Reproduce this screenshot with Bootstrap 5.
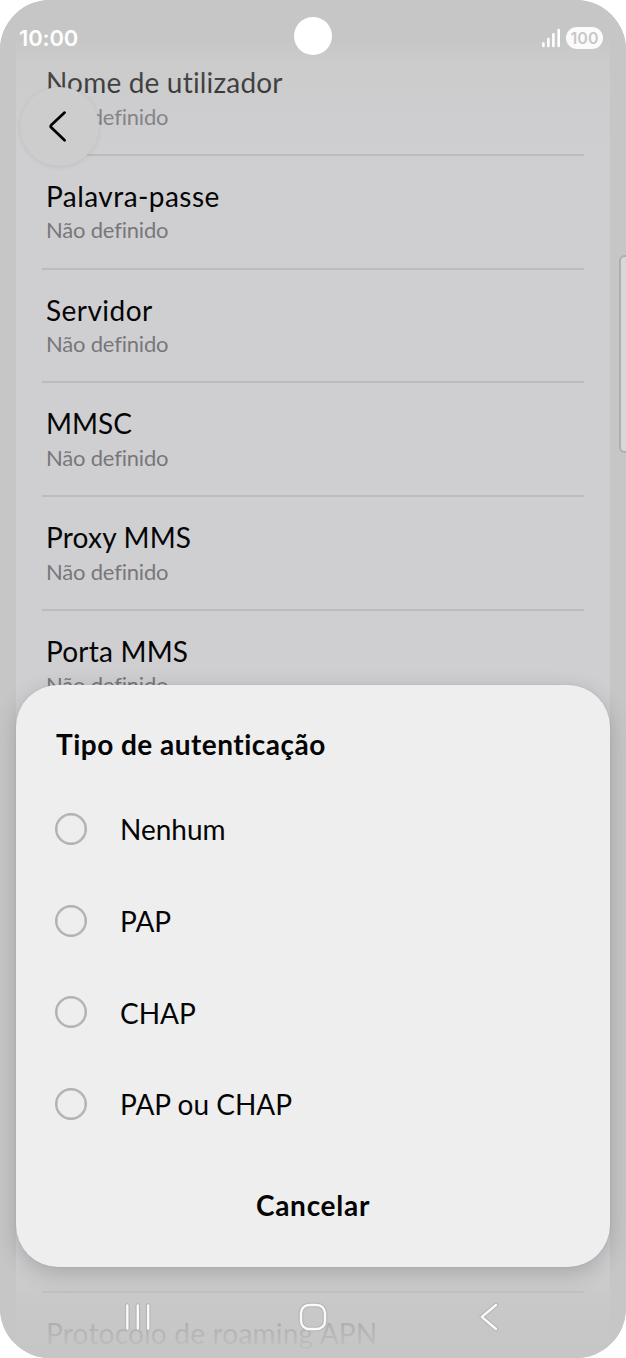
<!DOCTYPE html>
<html lang="pt">
<head>
<meta charset="utf-8">
<meta name="viewport" content="width=device-width, initial-scale=1">
<title>Tipo de autenticação</title>
<link href="https://cdn.jsdelivr.net/npm/bootstrap@5.3.0/dist/css/bootstrap.min.css" rel="stylesheet">
<style>
body{background:#fff;font-family:Lato,"Noto Sans",sans-serif;color:#050506;font-variant-ligatures:none}
.phone{width:626px;height:1358px;border-radius:50px;background:#c6c6c6}
.settings{width:594px;margin:42px 16px 0;padding:0 26px;background:#cfcfd1;height:1316px}
.setting{height:113.75px;border-bottom:2px solid #bcbcbe;padding:21px 4px 0}
.setting-name{font-size:28px;line-height:38px}
.setting-value{font-size:22px;line-height:30px;color:#77777a;letter-spacing:-.2px;padding-top:.5px}
.unseen{height:568.5px;border-bottom:2px solid #b9b9bb}
.sp-1{letter-spacing:.18px}
.sp-2{letter-spacing:.2px}
.sp-3{letter-spacing:.45px}
.fade-top{height:155px;background:linear-gradient(#c6c6c6 0,#c6c6c6 24%,rgba(198,198,198,.4) 40%,rgba(198,198,198,0))}
.fade-bottom{height:100px;background:linear-gradient(rgba(198,198,198,0),rgba(198,198,198,.65) 38%,rgba(198,198,198,.88) 65%,rgba(198,198,198,.96) 88%,#c6c6c6)}
.status{height:76px;padding:0 23px 0 19px}
.clock{font:600 22px/30px Inter,sans-serif;letter-spacing:-.15px;color:#fff}
.camera{width:38px;height:38px;background:#fff;left:294px;top:17px}
.battery{width:37px;height:22px;border-radius:11px;background:#fbfbfb;color:#c8c8c8;font:600 16px/22px Inter,sans-serif}
.back{width:79px;height:79px;left:20px;top:87px;background:#cdcdcd;box-shadow:0 1px 5px rgba(0,0,0,.08)}
.edge-handle{width:12px;height:198px;left:619px;top:255px;border:2px solid #afafaf;border-radius:9px;background:#d8d8d9}
.sheet{left:16px;top:685px;width:594px;height:582px;border-radius:42px;background:#eee;box-shadow:0 6px 22px rgba(0,0,0,.19),0 0 2px rgba(0,0,0,.1);padding:40px 40px 0 39px}
.sheet-title{font-size:28px;line-height:38px;font-weight:700;margin:0 0 20px 1px;letter-spacing:.48px}
.choice{height:91.7px;gap:33px}
.choice .form-check-input{width:32px;height:32px;border:2px solid #b1b1b4;box-shadow:inset 0 0 0 .5px #b1b1b4;background:transparent;margin:0}
.choice label{font-size:28px;line-height:38px;padding-top:1px}
.cancel{font-size:28px;line-height:38px;font-weight:700;color:#050506;padding:0 0 0 1px;border:0;margin-top:36px;letter-spacing:.72px}
.navkeys{height:82px}
</style>
</head>
<body>
<main class="phone position-relative overflow-hidden">
  <div class="overflow-hidden h-100">
  <section class="settings">
    <div class="setting"><div class="setting-name sp-1">Nome de utilizador</div><div class="setting-value">Não definido</div></div>
    <div class="setting"><div class="setting-name sp-3">Palavra-passe</div><div class="setting-value">Não definido</div></div>
    <div class="setting"><div class="setting-name sp-3">Servidor</div><div class="setting-value">Não definido</div></div>
    <div class="setting"><div class="setting-name">MMSC</div><div class="setting-value">Não definido</div></div>
    <div class="setting"><div class="setting-name sp-2">Proxy MMS</div><div class="setting-value">Não definido</div></div>
    <div class="setting"><div class="setting-name sp-2">Porta MMS</div><div class="setting-value">Não definido</div></div>
    <div class="unseen"></div>
    <div class="setting border-0"><div class="setting-name sp-2">Protocolo de roaming APN</div></div>
  </section>
  </div>
  <div class="fade-top position-absolute top-0 start-0 w-100"></div>
  <div class="fade-bottom position-absolute bottom-0 start-0 w-100"></div>
  <header class="status position-absolute top-0 start-0 w-100 d-flex align-items-center justify-content-between">
    <span class="clock">10:00</span>
    <span class="d-flex align-items-center gap-1">
      <svg width="20" height="20" viewBox="0 0 20 20" stroke="#fff" stroke-width="2.6" stroke-linecap="round"><path d="M1.4 15.6V18M6.4 11V18M11.4 6.3V18M16.7 2V18"/></svg>
      <span class="battery text-center">100</span>
    </span>
  </header>
  <div class="camera position-absolute rounded-circle"></div>
  <div class="back position-absolute rounded-circle">
    <svg width="79" height="79" viewBox="0 0 79 79" fill="none" stroke="#000" stroke-width="2.7" stroke-linecap="round" stroke-linejoin="round"><path d="M44.6 25.6L31.3 38.1Q30.1 39.3 31.3 40.5L44.6 53.2"/></svg>
  </div>
  <div class="edge-handle position-absolute"></div>
  <section class="sheet position-absolute">
    <h1 class="sheet-title">Tipo de autenticação</h1>
    <div class="choice d-flex align-items-center"><input class="form-check-input" type="radio" name="auth" id="a1"><label for="a1">Nenhum</label></div>
    <div class="choice d-flex align-items-center"><input class="form-check-input" type="radio" name="auth" id="a2"><label for="a2">PAP</label></div>
    <div class="choice d-flex align-items-center"><input class="form-check-input" type="radio" name="auth" id="a3"><label for="a3">CHAP</label></div>
    <div class="choice d-flex align-items-center"><input class="form-check-input" type="radio" name="auth" id="a4"><label for="a4">PAP ou CHAP</label></div>
    <div class="text-center"><button class="btn cancel">Cancelar</button></div>
  </section>
  <nav class="navkeys position-absolute bottom-0 start-0 w-100">
    <svg width="626" height="82" viewBox="0 0 626 82" fill="none" stroke-linecap="round" stroke-linejoin="round">
      <g stroke="#b4b4b5" stroke-width="4.6"><path d="M127.3 29.5V52.5M137.8 29.5V52.5M148.2 29.5V52.5M496 29L481.8 40.8L496 53"/><rect x="301" y="29" width="24" height="24" rx="8"/></g>
      <g stroke="#fafafa" stroke-width="2.4"><path d="M127.3 29.5V52.5M137.8 29.5V52.5M148.2 29.5V52.5M496 29L481.8 40.8L496 53"/><rect x="301" y="29" width="24" height="24" rx="8"/></g>
    </svg>
  </nav>
</main>
<script src="https://cdn.jsdelivr.net/npm/bootstrap@5.3.0/dist/js/bootstrap.bundle.min.js"></script>
</body>
</html>
